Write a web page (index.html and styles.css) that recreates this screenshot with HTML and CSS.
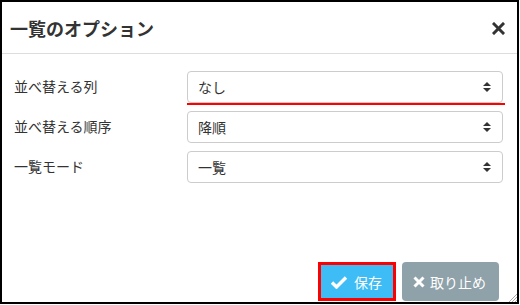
FILE: index.html
```html
<!DOCTYPE html>
<html lang="ja">
<head>
    <meta charset="UTF-8">
    <title>一覧のオプション</title>
    <link rel="stylesheet" href="styles.css">
</head>
<body>
    <div class="dialog">
        <div class="dialog-header">
            <h2 class="dialog-title">一覧のオプション</h2>
            <span class="close-button">
                <svg width="13" height="13" viewBox="0 0 13 13"><path d="M2 2 L11 11 M11 2 L2 11" stroke="#333" stroke-width="3" stroke-linecap="square"/></svg>
            </span>
        </div>

        <div class="dialog-body">
            <label class="field-label">並べ替える列</label>
            <div class="select focused">
                <span>なし</span>
                <svg class="sort-icon" width="8" height="12" viewBox="0 0 8 12"><path d="M4 1 L8 5 L0 5 Z M0 7 L8 7 L4 11 Z" fill="#333"/></svg>
            </div>

            <label class="field-label">並べ替える順序</label>
            <div class="select">
                <span>降順</span>
                <svg class="sort-icon" width="8" height="12" viewBox="0 0 8 12"><path d="M4 1 L8 5 L0 5 Z M0 7 L8 7 L4 11 Z" fill="#333"/></svg>
            </div>

            <label class="field-label">一覧モード</label>
            <div class="select">
                <span>一覧</span>
                <svg class="sort-icon" width="8" height="12" viewBox="0 0 8 12"><path d="M4 1 L8 5 L0 5 Z M0 7 L8 7 L4 11 Z" fill="#333"/></svg>
            </div>
        </div>

        <div class="dialog-footer">
            <button class="btn btn-save">
                <svg width="18" height="14" viewBox="0 0 18 14"><path d="M2 7.5 L6.5 12 L16 2.5" stroke="#fff" stroke-width="3.4" fill="none"/></svg>
                保存
            </button>
            <button class="btn btn-cancel">
                <svg width="12" height="12" viewBox="0 0 12 12"><path d="M1.5 1.5 L10.5 10.5 M10.5 1.5 L1.5 10.5" stroke="#fff" stroke-width="3"/></svg>
                取り止め
            </button>
        </div>

        <svg class="resize-grip" width="9" height="9" viewBox="0 0 9 9"><path d="M9 1 L1 9 M9 4 L4 9 M9 7 L7 9" stroke="#aaa" stroke-width="1"/></svg>
    </div>
</body>
</html>
```

FILE: styles.css
```css
body {
    margin: 0;
    font-family: "Noto Sans CJK JP", "Liberation Sans", sans-serif;
    color: #333;
    background: #fff;
}

.dialog {
    position: relative;
    box-sizing: border-box;
    width: 519px;
    height: 304px;
    border: 2px solid #000;
    display: flex;
    flex-direction: column;
}

.dialog-header {
    height: 51px;
    border-bottom: 1px solid #ddd;
    display: flex;
    align-items: center;
    justify-content: space-between;
    padding: 0 12px 0 8px;
}

.dialog-title {
    margin: 0;
    font-size: 18px;
    font-weight: bold;
    color: #333;
}

.close-button {
    display: flex;
    margin-top: 2px;
}

.dialog-body {
    display: grid;
    grid-template-columns: 173px 1fr;
    row-gap: 8px;
    align-items: center;
    padding: 17px 14px 0 12px;
}

.field-label {
    font-size: 14px;
    color: #333;
    padding-bottom: 3px;
}

.select {
    position: relative;
    box-sizing: border-box;
    height: 32px;
    border: 1px solid #ccc;
    border-radius: 4px;
    display: flex;
    align-items: center;
    justify-content: space-between;
    padding: 0 10px 0 10px;
    font-size: 14px;
    color: #333;
}

.select.focused::after {
    content: "";
    position: absolute;
    left: -1px;
    right: -3px;
    bottom: -3px;
    height: 2px;
    background: #f00;
}

.sort-icon {
    margin-right: 1px;
}

.dialog-footer {
    margin-top: auto;
    display: flex;
    justify-content: flex-end;
    gap: 6px;
    padding: 0 18px 1px 0;
}

.btn {
    box-sizing: border-box;
    height: 39px;
    border: none;
    border-radius: 4px;
    display: flex;
    align-items: center;
    gap: 6px;
    font-family: inherit;
    font-size: 14px;
    color: #fff;
}

.btn-save {
    width: 78px;
    background: #3dbcf5;
    border: 3px solid #f00;
    border-radius: 0;
    padding: 0 0 0 9px;
}

.btn-cancel {
    width: 97px;
    background: #8fa1a9;
    padding: 0 0 0 11px;
    gap: 5px;
}

.resize-grip {
    position: absolute;
    right: 0;
    bottom: 0;
}
```
